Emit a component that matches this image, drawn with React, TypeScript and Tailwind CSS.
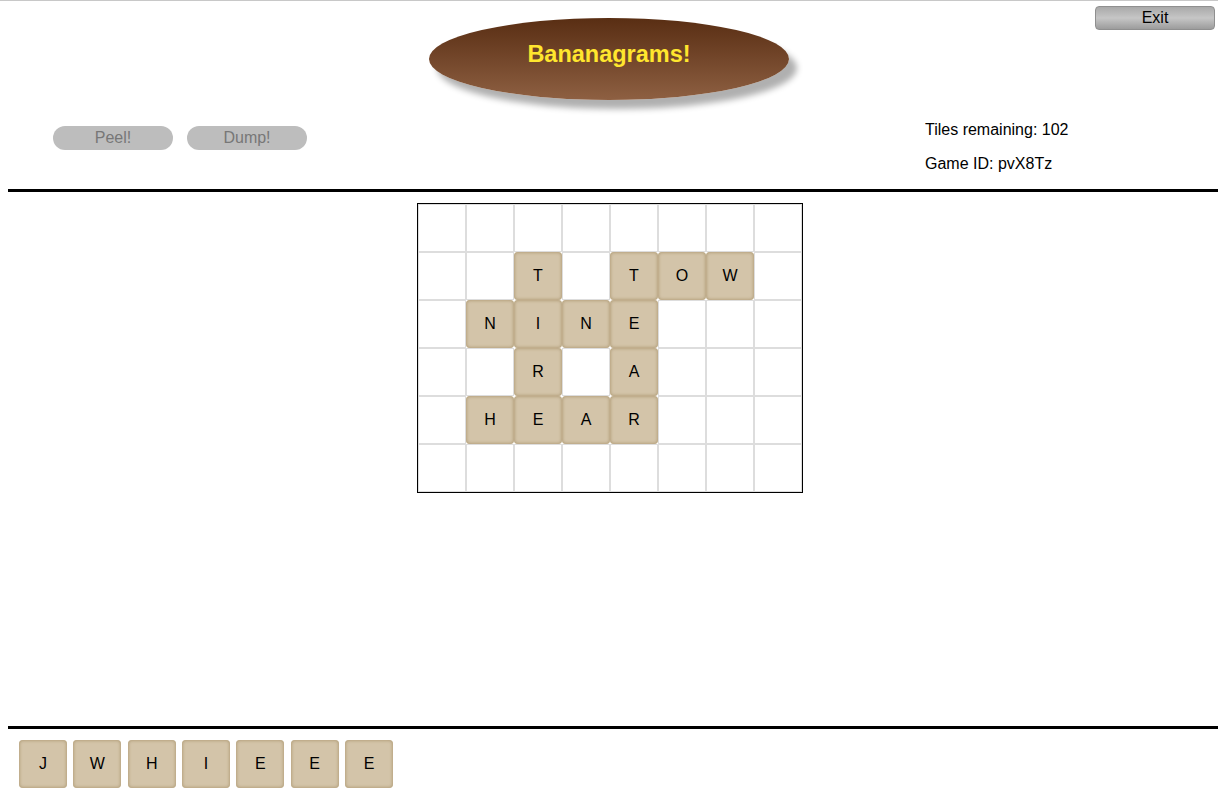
import React from "react";

const board: string[][] = [
  ["", "", "", "", "", "", "", ""],
  ["", "", "T", "", "T", "O", "W", ""],
  ["", "N", "I", "N", "E", "", "", ""],
  ["", "", "R", "", "A", "", "", ""],
  ["", "H", "E", "A", "R", "", "", ""],
  ["", "", "", "", "", "", "", ""],
];

const rack = ["J", "W", "H", "I", "E", "E", "E"];

function Tile({ letter }: { letter: string }) {
  return (
    <div className="w-[48px] h-[48px] rounded-[4px] bg-[#d3c4a9] shadow-[inset_0_0_3px_1px_#b6a27e] flex items-center justify-center text-[16px] text-black">
      {letter}
    </div>
  );
}

export default function App() {
  return (
    <div
      className="min-h-[794px] flex flex-col bg-white text-black border-t border-[#c8c8c8]"
      style={{ fontFamily: '"Liberation Sans", Arial, sans-serif' }}
    >
      {/* Header row 1 */}
      <div className="h-[105px] grid grid-cols-[1fr_auto_1fr]">
        <div />
        <div className="mt-[17px] w-[360px] h-[82px] rounded-[50%] bg-gradient-to-b from-[#592e13] to-[#8e6042] shadow-[8px_9px_6px_#b0b0b0] flex items-center justify-center pb-[8px]">
          <span className="text-[23.5px] font-bold text-[#ffe62e]">Bananagrams!</span>
        </div>
        <div className="flex justify-end items-start pr-[3px]">
          <button className="mt-[5px] w-[120px] h-[24px] rounded-[4px] border border-[#8f8f8f] bg-gradient-to-b from-[#a9a9a9] via-[#c6c6c6] to-[#9c9c9c] text-[16px] leading-[20px] text-black">
            Exit
          </button>
        </div>
      </div>

      {/* Header row 2 */}
      <div className="h-[83px] flex justify-between">
        <div className="pl-[53px] pt-[20px] flex gap-[14px] items-start">
          <button className="w-[120px] h-[24px] rounded-full bg-[#bdbdbd] text-[16px] text-[#777777]">
            Peel!
          </button>
          <button className="w-[120px] h-[24px] rounded-full bg-[#bdbdbd] text-[16px] text-[#777777]">
            Dump!
          </button>
        </div>
        <div className="w-[293px] pt-[15px] flex flex-col gap-[16px] text-[16px] leading-[18px]">
          <p>Tiles remaining: 102</p>
          <p>Game ID: pvX8Tz</p>
        </div>
      </div>

      <div className="ml-[8px] h-[3px] bg-black" />

      {/* Board */}
      <div className="flex-1 flex justify-center items-start pt-[11px] pl-[2px]">
        <div className="border border-black grid grid-cols-[repeat(8,48px)]">
          {board.flatMap((row, r) =>
            row.map((c, ci) =>
              c ? (
                <Tile key={`${r}-${ci}`} letter={c} />
              ) : (
                <div key={`${r}-${ci}`} className="w-[48px] h-[48px] border border-[#dddddd]" />
              )
            )
          )}
        </div>
      </div>

      <div className="ml-[8px] h-[3px] bg-black" />

      {/* Rack */}
      <div className="h-[65px] pl-[19px] pt-[11px] flex gap-[6.33px] items-start">
        {rack.map((l, i) => (
          <Tile key={i} letter={l} />
        ))}
      </div>
    </div>
  );
}
